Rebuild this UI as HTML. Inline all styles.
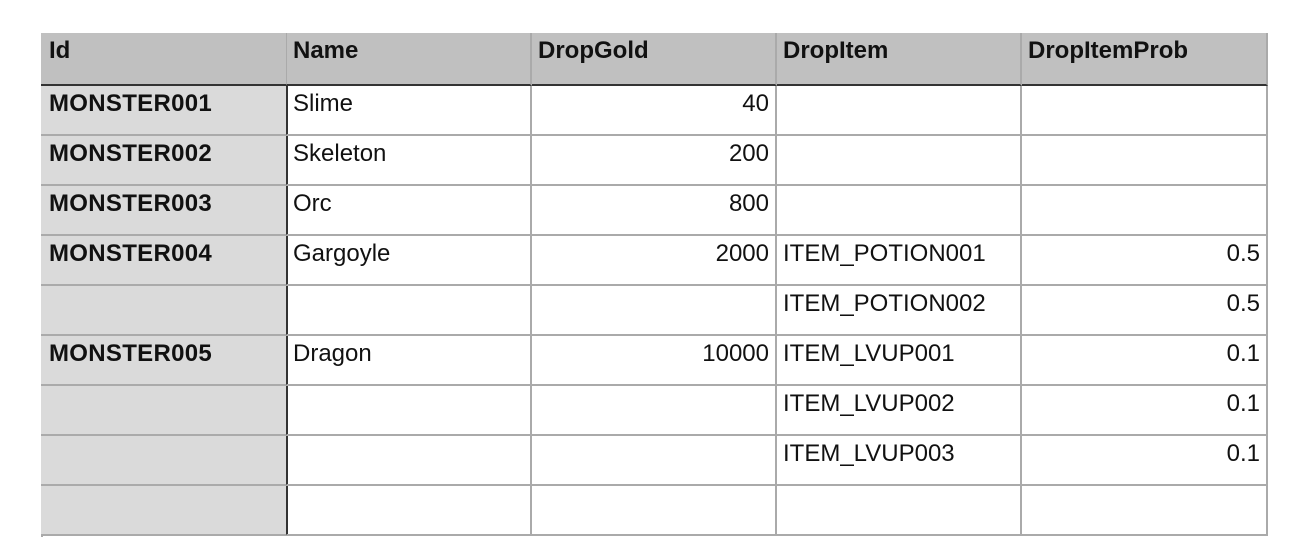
<html><head><style>
body{margin:0;background:#fff;width:1306px;height:560px;position:relative;font-family:"Liberation Sans",Arial,sans-serif;font-size:24px;color:#111}
.c{position:absolute;box-sizing:border-box;height:50px;width:245px;padding:4px 6px;line-height:28px;border-right:2px solid #aaa;border-bottom:2px solid #aaa;white-space:nowrap}
.h{background:#c0c0c0;font-weight:bold;padding-top:4px}
.i{background:#dadada;font-weight:bold;border-right:2px solid #333;letter-spacing:0.3px}
.r{text-align:right}
</style></head><body>
<div style="position:absolute;left:41px;top:33px;width:1227px;height:504px;border-left:2px solid #aaa;border-top:2px solid #aaa;box-sizing:border-box"></div>
<div id="t"></div>
<script>
var cols=[41,287,532,777,1022],w=[247,245,245,245,246];
var rows=[["Id","Name","DropGold","DropItem","DropItemProb"],
["MONSTER001","Slime","40","",""],["MONSTER002","Skeleton","200","",""],["MONSTER003","Orc","800","",""],
["MONSTER004","Gargoyle","2000","ITEM_POTION001","0.5"],["","","","ITEM_POTION002","0.5"],
["MONSTER005","Dragon","10000","ITEM_LVUP001","0.1"],["","","","ITEM_LVUP002","0.1"],["","","","ITEM_LVUP003","0.1"],["","","","",""]];
var h="";
rows.forEach(function(r,ri){var top=ri==0?33:86+(ri-1)*50;
r.forEach(function(v,ci){var cls="c";if(ri==0)cls+=" h";else if(ci==0)cls+=" i";if(ri>0&&(ci==2||ci==4))cls+=" r";
var st="left:"+cols[ci]+"px;top:"+top+"px;width:"+w[ci]+"px;"+(ri==0?"height:53px;border-bottom:2px solid #333;":"")+(ci==0?"padding-left:8px;":"");
h+='<div class="'+cls+'" style="'+st+'">'+v+'</div>';});});
document.getElementById("t").innerHTML=h;
</script>
</body></html>
